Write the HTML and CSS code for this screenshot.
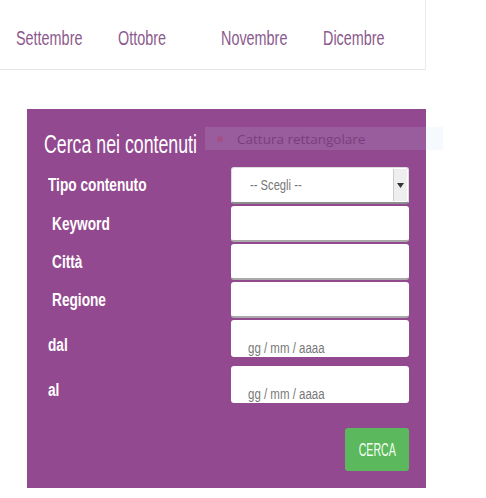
FILE: index.html
```html
<!DOCTYPE html>
<html lang="it">
<head>
<meta charset="utf-8">
<link rel="stylesheet" href="styles.css">
</head>
<body>
<div class="topbar">
  <span class="month m1"><span class="mtxt">Settembre</span></span>
  <span class="month m2"><span class="mtxt">Ottobre</span></span>
  <span class="month m3"><span class="mtxt">Novembre</span></span>
  <span class="month m4"><span class="mtxt">Dicembre</span></span>
</div>
<div class="panel">
  <h2 class="title"><span class="ttxt">Cerca nei contenuti</span></h2>
  <div class="form">
    <label class="lab"><span class="ltxt">Tipo contenuto</span></label>
    <div class="field select"><span class="ph">-- Scegli --</span><span class="arrow"><svg width="7" height="5" viewBox="0 0 7 5"><path d="M0 0h7L3.5 5z" fill="#333"/></svg></span></div>
    <label class="lab ind"><span class="ltxt">Keyword</span></label>
    <div class="field"></div>
    <label class="lab ind"><span class="ltxt">Città</span></label>
    <div class="field"></div>
    <label class="lab ind"><span class="ltxt">Regione</span></label>
    <div class="field"></div>
    <label class="lab low"><span class="ltxt">dal</span></label>
    <div class="field date"><span class="ph dph">gg / mm / aaaa</span></div>
    <label class="lab low last"><span class="ltxt">al</span></label>
    <div class="field date second"><span class="ph dph">gg / mm / aaaa</span></div>
  </div>
  <div class="actions"><span class="btn"><span class="btxt">CERCA</span></span></div>
</div>
<div class="capture"><span class="dot"></span><span class="captext">Cattura rettangolare</span></div>
</body>
</html>
```
FILE: styles.css
```css
body {
  margin: 0;
  background: #fff;
  font-family: "Liberation Sans", Arial, sans-serif;
}
.topbar {
  width: 425px;
  height: 69px;
  border-right: 1px solid #ececec;
  border-bottom: 1px solid #e6e6e6;
  display: flex;
  align-items: center;
}
.month {
  display: block;
  white-space: nowrap;
  font-size: 20px;
  color: #8b5a8d;
  padding-top: 8px;
}
.mtxt {
  display: inline-block;
  transform: scaleX(0.72);
  transform-origin: left center;
}
.m1 { margin-left: 16px; width: 102px; }
.m2 { width: 103px; }
.m3 { width: 102px; }
.m4 { width: 80px; }
.panel {
  margin-top: 39px;
  margin-left: 27px;
  width: 399px;
  height: 379px;
  background: #93498f;
  box-sizing: border-box;
  padding: 21px 17px 0 17px;
}
.title {
  margin: 0;
  font-weight: normal;
  color: #fff;
  font-size: 25px;
  height: 37px;
  line-height: 28px;
  white-space: nowrap;
}
.ttxt {
  display: inline-block;
  transform: scaleX(0.71);
  transform-origin: left center;
}
.form {
  display: grid;
  grid-template-columns: 187px 178px;
  grid-template-rows: 37px 36px 36px 36px 37px 46px;
  row-gap: 2px;
}
.lab {
  color: #fff;
  font-weight: bold;
  font-size: 18px;
  align-self: center;
  padding-left: 4px;
  white-space: nowrap;
}
.ltxt {
  display: inline-block;
  transform: scaleX(0.76);
  transform-origin: left center;
}
.lab.ind { padding-left: 8px; }
.lab.low { align-self: end; padding-bottom: 1px; }
.lab.last { padding-bottom: 4px; }
.second { margin-top: 7px; }
.field {
  background: #fff;
  border-radius: 3px;
  border-bottom: 2px solid #a9a9a9;
  box-sizing: border-box;
  position: relative;
  display: flex;
  align-items: center;
}
.field.select {
  border: 1px solid #ddd;
  border-bottom: 2px solid #8d8d8d;
}
.ph {
  display: inline-block;
  font-size: 14px;
  color: #777;
  white-space: nowrap;
  transform: scaleX(0.8);
  transform-origin: left center;
  margin-left: 18px;
}
.dph {
  transform: scaleX(0.82);
  margin-left: 17px;
  line-height: 14px;
}
.arrow {
  position: absolute;
  right: 1px;
  top: 1px;
  bottom: 1px;
  width: 13px;
  background: #eee;
  border-left: 1px solid #ccc;
  display: flex;
  align-items: center;
  justify-content: center;
}
.field.date {
  height: 37px;
  border-bottom: 0;
  align-items: flex-end;
  padding-bottom: 2px;
}
.actions {
  display: flex;
  justify-content: flex-end;
  margin-top: 23px;
}
.btn {
  width: 64px;
  height: 43px;
  background: #5cb85c;
  border-radius: 3px;
  color: #f3fff0;
  font-size: 19px;
  display: flex;
  align-items: center;
  justify-content: center;
  white-space: nowrap;
}
.btxt {
  display: inline-block;
  transform: scaleX(0.56);
}
.capture {
  position: absolute;
  left: 205px;
  top: 127px;
  width: 238px;
  height: 23px;
  background: rgba(190, 215, 240, 0.14);
  display: flex;
  align-items: center;
}
.dot {
  width: 6px;
  height: 6px;
  border-radius: 50%;
  background: #a64f86;
  margin-left: 12px;
}
.captext {
  font-family: "Open Sans", sans-serif;
  font-size: 13.5px;
  color: #7c3c7c;
  margin-left: 14px;
}
```
